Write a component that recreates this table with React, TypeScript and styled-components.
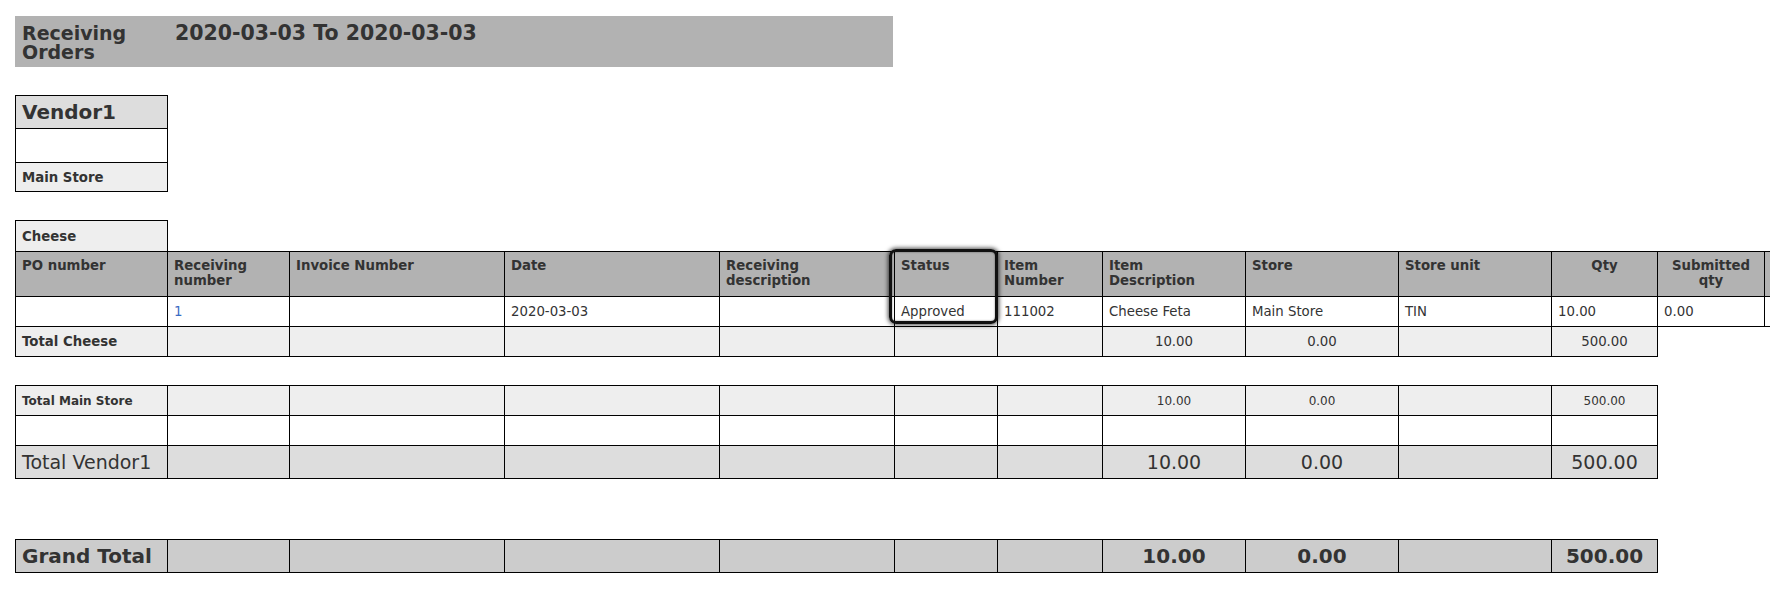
import React from "react";
import styled, { createGlobalStyle } from "styled-components";

const GlobalStyle = createGlobalStyle`
  html, body { margin: 0; padding: 0; background: #fff; overflow: hidden; }
  body { font-family: "DejaVu Sans", Verdana, sans-serif; color: #333; }
`;

const Page = styled.div`
  display: flex;
  flex-direction: column;
  align-items: flex-start;
  padding: 16px 0 0 15px;
  width: 1755px;
  overflow: hidden;
`;

const TitleBar = styled.div`
  display: flex;
  box-sizing: border-box;
  width: 878px;
  height: 51px;
  padding: 8px 7px 0;
  background: #b2b2b2;
  font-weight: bold;
  font-size: 19px;
  line-height: 19px;
`;

const TitleLabel = styled.div`
  width: 153px;
`;

const TitleRange = styled.div`
  font-size: 20.5px;
  line-height: 19px;
`;

const Block = styled.div<{ $mt: number }>`
  margin-top: ${(p) => p.$mt}px;
`;

const Table = styled.table<{ $width: number }>`
  border-collapse: collapse;
  table-layout: fixed;
  width: ${(p) => p.$width}px;
`;

const Row = styled.tr<{ $h: number }>`
  height: ${(p) => p.$h}px;
`;

type Tone = "white" | "light" | "mid" | "dark" | "head";
const toneBg: Record<Tone, string> = {
  white: "#ffffff",
  light: "#eeeeee",
  mid: "#dddddd",
  dark: "#cccccc",
  head: "#b2b2b2",
};

const Cell = styled.td<{
  $tone?: Tone;
  $size?: number;
  $bold?: boolean;
  $align?: "left" | "center";
}>`
  border: 1px solid #000;
  padding: 0 6px;
  background: ${(p) => toneBg[p.$tone || "white"]};
  font-size: ${(p) => p.$size || 13.3}px;
  font-weight: ${(p) => (p.$bold ? "bold" : "normal")};
  text-align: ${(p) => p.$align || "left"};
  vertical-align: middle;
  white-space: nowrap;
  overflow: hidden;
`;

const HeadCell = styled.th<{ $align?: "left" | "center" }>`
  position: relative;
  border: 1px solid #000;
  padding: 6px 6px 0;
  background: #b2b2b2;
  font-size: 13.3px;
  font-weight: bold;
  line-height: 15px;
  text-align: ${(p) => p.$align || "left"};
  vertical-align: top;
`;

const Link = styled.a`
  color: #3a6cc4;
  text-decoration: none;
`;

const Highlight = styled.span`
  position: absolute;
  left: -6px;
  top: -3px;
  width: 109px;
  height: 75px;
  box-sizing: border-box;
  border: 3px solid #111;
  border-radius: 7px;
  box-shadow: 0 0 4px 1px rgba(0, 0, 0, 0.7), inset 0 0 2px rgba(0, 0, 0, 0.5);
  pointer-events: none;
  z-index: 2;
`;

const widths = [152, 122, 215, 215, 175, 103, 105, 143, 153, 153, 106, 107, 106];
const totalWidths = widths.slice(0, 11);
const sum = (a: number[]) => a.reduce((s, v) => s + v, 0);

const Cols = ({ list }: { list: number[] }) => (
  <colgroup>
    {list.map((w, i) => (
      <col key={i} style={{ width: w }} />
    ))}
  </colgroup>
);

type TotalRowProps = {
  label: string;
  tone: Tone;
  h: number;
  labelSize: number;
  numSize: number;
  bold: boolean;
  labelBold: boolean;
  values?: [string, string, string];
};

const TotalRow = ({ label, tone, h, labelSize, numSize, bold, labelBold, values }: TotalRowProps) => {
  const v = values || ["", "", ""];
  return (
    <Row $h={h}>
      <Cell $tone={tone} $size={labelSize} $bold={labelBold}>
        {label}
      </Cell>
      {[0, 1, 2, 3, 4, 5].map((i) => (
        <Cell key={i} $tone={tone} />
      ))}
      <Cell $tone={tone} $size={numSize} $bold={bold} $align="center">
        {v[0]}
      </Cell>
      <Cell $tone={tone} $size={numSize} $bold={bold} $align="center">
        {v[1]}
      </Cell>
      <Cell $tone={tone} />
      <Cell $tone={tone} $size={numSize} $bold={bold} $align="center">
        {v[2]}
      </Cell>
    </Row>
  );
};

const headers: { t: string[]; c?: boolean }[] = [
  { t: ["PO number"] },
  { t: ["Receiving", "number"] },
  { t: ["Invoice Number"] },
  { t: ["Date"] },
  { t: ["Receiving", "description"] },
  { t: ["Status"] },
  { t: ["Item", "Number"] },
  { t: ["Item", "Description"] },
  { t: ["Store"] },
  { t: ["Store unit"] },
  { t: ["Qty"], c: true },
  { t: ["Submitted", "qty"], c: true },
  { t: [] },
];

export default function App() {
  return (
    <>
      <GlobalStyle />
      <Page>
        <TitleBar>
          <TitleLabel>Receiving Orders</TitleLabel>
          <TitleRange>2020-03-03 To 2020-03-03</TitleRange>
        </TitleBar>

        <Block $mt={28}>
          <Table $width={153}>
            <tbody>
              <Row $h={33}>
                <Cell $tone="mid" $size={20} $bold>
                  Vendor1
                </Cell>
              </Row>
              <Row $h={34}>
                <Cell />
              </Row>
              <Row $h={29}>
                <Cell $tone="light" $bold>
                  Main Store
                </Cell>
              </Row>
            </tbody>
          </Table>
        </Block>

        <Block $mt={28}>
          <Table $width={sum(widths)}>
            <Cols list={widths} />
            <tbody>
              <Row $h={31}>
                <Cell $tone="light" $bold>
                  Cheese
                </Cell>
              </Row>
              <Row $h={45}>
                {headers.map((h, i) => (
                  <HeadCell key={i} $align={h.c ? "center" : "left"}>
                    {h.t.map((line, j) => (
                      <React.Fragment key={j}>
                        {j > 0 && <br />}
                        {line}
                      </React.Fragment>
                    ))}
                    {h.t[0] === "Status" && <Highlight />}
                  </HeadCell>
                ))}
              </Row>
              <Row $h={30}>
                <Cell />
                <Cell>
                  <Link href="#">1</Link>
                </Cell>
                <Cell />
                <Cell>2020-03-03</Cell>
                <Cell />
                <Cell>Approved</Cell>
                <Cell>111002</Cell>
                <Cell>Cheese Feta</Cell>
                <Cell>Main Store</Cell>
                <Cell>TIN</Cell>
                <Cell>10.00</Cell>
                <Cell>0.00</Cell>
                <Cell />
              </Row>
              <TotalRow
                label="Total Cheese"
                tone="light"
                h={30}
                labelSize={13.3}
                numSize={13.3}
                bold={false}
                labelBold
                values={["10.00", "0.00", "500.00"]}
              />
            </tbody>
          </Table>
        </Block>

        <Block $mt={28}>
          <Table $width={sum(totalWidths)}>
            <Cols list={totalWidths} />
            <tbody>
              <TotalRow
                label="Total Main Store"
                tone="light"
                h={30}
                labelSize={12}
                numSize={12}
                bold={false}
                labelBold
                values={["10.00", "0.00", "500.00"]}
              />
              <TotalRow label="" tone="white" h={30} labelSize={12} numSize={12} bold={false} labelBold={false} />
              <TotalRow
                label="Total Vendor1"
                tone="mid"
                h={33}
                labelSize={19}
                numSize={19}
                bold={false}
                labelBold={false}
                values={["10.00", "0.00", "500.00"]}
              />
            </tbody>
          </Table>
        </Block>

        <Block $mt={60}>
          <Table $width={sum(totalWidths)}>
            <Cols list={totalWidths} />
            <tbody>
              <TotalRow
                label="Grand Total"
                tone="dark"
                h={33}
                labelSize={20}
                numSize={20}
                bold
                labelBold
                values={["10.00", "0.00", "500.00"]}
              />
            </tbody>
          </Table>
        </Block>
      </Page>
    </>
  );
}
